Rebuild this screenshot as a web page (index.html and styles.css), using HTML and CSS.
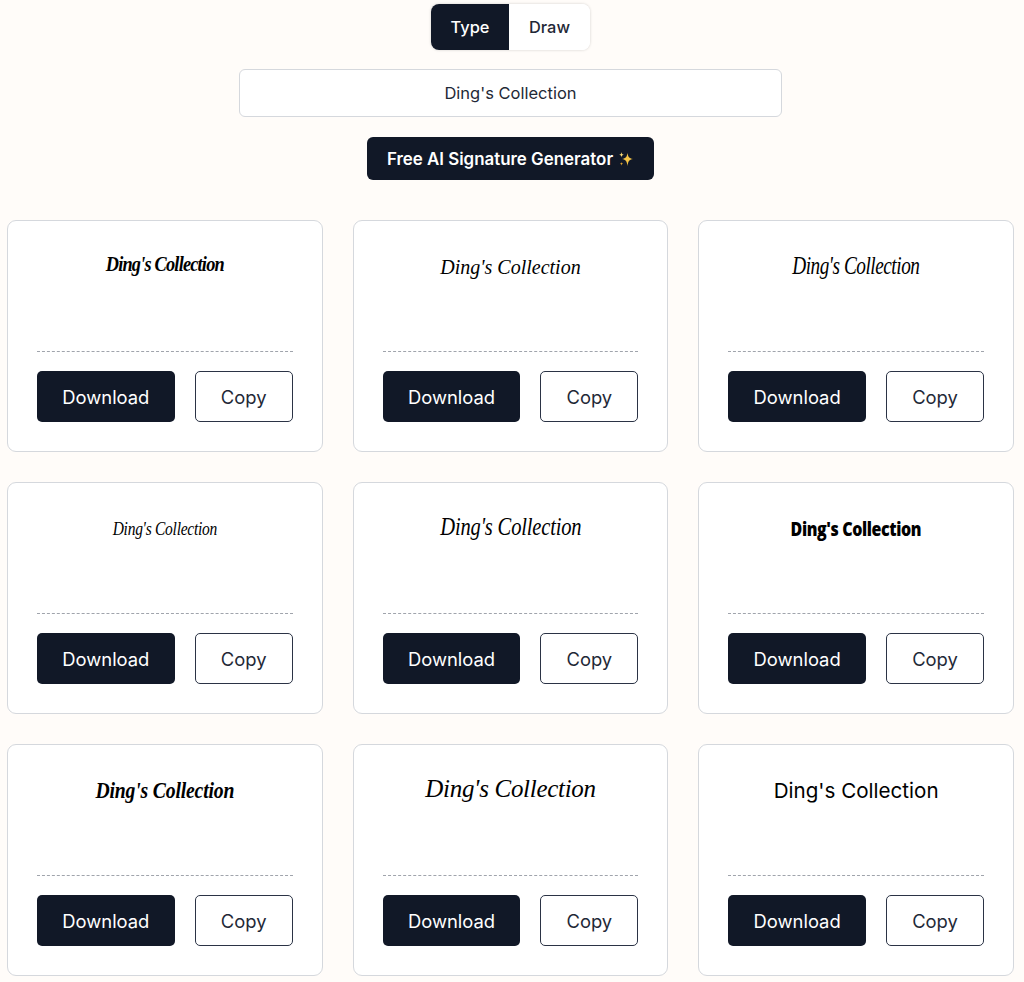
FILE: index.html
```html
<!DOCTYPE html>
<html>
<head>
    <link rel="stylesheet" href="styles.css">
</head>
<body>
    <div class="top-section">
        <div class="mode-toggle">
            <button class="mode-btn active">Type</button>
            <button class="mode-btn">Draw</button>
        </div>
        <input class="name-input" type="text" value="Ding's Collection">
        <button class="ai-btn">Free AI Signature Generator
            <svg class="sparkles" viewBox="0 0 16 16" width="16" height="16">
                <path d="M9.5 2 C10.2 6 11 7.2 15 8 C11 8.8 10.2 10 9.5 15 C8.8 10 8 8.8 4 8 C8 7.2 8.8 6 9.5 2Z" fill="#f6c445"/>
                <path d="M3.5 1 C3.8 3 4.2 3.4 6 3.7 C4.2 4 3.8 4.4 3.5 6.4 C3.2 4.4 2.8 4 1 3.7 C2.8 3.4 3.2 3 3.5 1Z" fill="#f9d976"/>
                <path d="M3.5 11 C3.7 12.3 4 12.6 5.2 12.8 C4 13 3.7 13.3 3.5 14.8 C3.3 13.3 3 13 1.8 12.8 C3 12.6 3.3 12.3 3.5 11Z" fill="#e9a92e"/>
            </svg>
        </button>
    </div>

    <div class="signature-grid">
        <div class="signature-card">
            <div class="signature-preview"><span class="sig sig-brush">Ding's Collection</span></div>
            <div class="card-actions"><button class="btn btn-download">Download</button><button class="btn btn-copy">Copy</button></div>
        </div>
        <div class="signature-card">
            <div class="signature-preview"><span class="sig sig-flow">Ding's Collection</span></div>
            <div class="card-actions"><button class="btn btn-download">Download</button><button class="btn btn-copy">Copy</button></div>
        </div>
        <div class="signature-card">
            <div class="signature-preview"><span class="sig sig-tall">Ding's Collection</span></div>
            <div class="card-actions"><button class="btn btn-download">Download</button><button class="btn btn-copy">Copy</button></div>
        </div>
        <div class="signature-card">
            <div class="signature-preview"><span class="sig sig-small">Ding's Collection</span></div>
            <div class="card-actions"><button class="btn btn-download">Download</button><button class="btn btn-copy">Copy</button></div>
        </div>
        <div class="signature-card">
            <div class="signature-preview"><span class="sig sig-thin">Ding's Collection</span></div>
            <div class="card-actions"><button class="btn btn-download">Download</button><button class="btn btn-copy">Copy</button></div>
        </div>
        <div class="signature-card">
            <div class="signature-preview"><span class="sig sig-marker">Ding's Collection</span></div>
            <div class="card-actions"><button class="btn btn-download">Download</button><button class="btn btn-copy">Copy</button></div>
        </div>
        <div class="signature-card">
            <div class="signature-preview"><span class="sig sig-bold">Ding's Collection</span></div>
            <div class="card-actions"><button class="btn btn-download">Download</button><button class="btn btn-copy">Copy</button></div>
        </div>
        <div class="signature-card">
            <div class="signature-preview"><span class="sig sig-wide">Ding's Collection</span></div>
            <div class="card-actions"><button class="btn btn-download">Download</button><button class="btn btn-copy">Copy</button></div>
        </div>
        <div class="signature-card">
            <div class="signature-preview"><span class="sig sig-plain">Ding's Collection</span></div>
            <div class="card-actions"><button class="btn btn-download">Download</button><button class="btn btn-copy">Copy</button></div>
        </div>
    </div>
</body>
</html>
```

FILE: styles.css
```css
body {
    margin: 0;
    padding: 4px 10px 6px 7px;
    font-family: Inter, "Liberation Sans", sans-serif;
    background-color: #fffcf9;
    color: #111827;
}
.top-section {
    display: flex;
    flex-direction: column;
    align-items: center;
}
.mode-toggle {
    display: flex;
    height: 46px;
    border-radius: 8px;
    overflow: hidden;
    background: white;
    box-shadow: 0 0 3px rgba(0,0,0,0.18);
}
.mode-btn {
    width: 78px;
    border: none;
    background: white;
    color: #1f2937;
    font-family: inherit;
    font-size: 16.4px;
    font-weight: 500;
    padding: 0;
}
.mode-btn + .mode-btn {
    width: 81px;
}
.mode-btn.active {
    background: #111827;
    color: white;
}
.name-input {
    box-sizing: border-box;
    width: 543px;
    height: 48px;
    margin-top: 19px;
    border: 1px solid #d5d8dd;
    border-radius: 6px;
    background: white;
    color: #1f2937;
    font-family: inherit;
    font-size: 16.5px;
    text-align: center;
    outline: none;
}
.ai-btn {
    display: flex;
    align-items: center;
    justify-content: center;
    gap: 5px;
    width: 287px;
    height: 43px;
    margin-top: 20px;
    border: none;
    border-radius: 6px;
    background: #111827;
    color: white;
    font-family: inherit;
    font-size: 16.9px;
    font-weight: 600;
    padding: 0;
}
.signature-grid {
    display: grid;
    grid-template-columns: repeat(3, 1fr);
    gap: 30px;
    margin-top: 40px;
}
.signature-card {
    box-sizing: border-box;
    height: 232px;
    padding: 29px;
    background: white;
    border: 1px solid #d5d8dd;
    border-radius: 9px;
}
.signature-preview {
    box-sizing: border-box;
    height: 102px;
    text-align: center;
    color: black;
    border-bottom: 1px dashed #a0a4ac;
}
.sig {
    display: block;
    line-height: 28px;
    white-space: nowrap;
    font-family: "Liberation Serif", serif;
    font-style: italic;
}
.sig-brush {
    font-size: 21px;
    font-weight: bold;
    letter-spacing: -0.9px;
    transform: scaleX(0.87);
}
.sig-flow {
    font-size: 20px;
    padding-top: 3px;
}
.sig-tall {
    font-size: 25px;
    letter-spacing: -0.6px;
    line-height: 32px;
    transform: scaleX(0.77);
}
.sig-small {
    font-size: 18px;
    letter-spacing: -0.3px;
    padding-top: 3px;
    transform: scaleX(0.86);
}
.sig-thin {
    font-size: 25px;
    letter-spacing: -0.2px;
    line-height: 30px;
    transform: scaleX(0.82);
}
.sig-marker {
    font-family: "Open Sans", sans-serif;
    font-style: normal;
    font-weight: 800;
    font-size: 20px;
    letter-spacing: -0.5px;
    padding-top: 3px;
    transform: scaleX(0.8);
}
.sig-bold {
    font-size: 24px;
    font-weight: bold;
    letter-spacing: -0.2px;
    line-height: 32px;
    transform: scaleX(0.82);
}
.sig-wide {
    font-size: 25px;
    letter-spacing: -0.3px;
    line-height: 30px;
}
.sig-plain {
    font-family: Inter, sans-serif;
    font-style: normal;
    font-size: 20.6px;
    line-height: 34px;
}
.card-actions {
    display: flex;
    gap: 20px;
    margin-top: 19px;
}
.btn {
    box-sizing: border-box;
    height: 51px;
    border-radius: 5px;
    font-family: inherit;
    font-size: 18.4px;
    padding: 0;
}
.btn-download {
    flex: 1;
    background: #111827;
    color: white;
    border: none;
}
.btn-copy {
    width: 98px;
    background: white;
    color: #1f2937;
    border: 1px solid #2b3345;
}
```
